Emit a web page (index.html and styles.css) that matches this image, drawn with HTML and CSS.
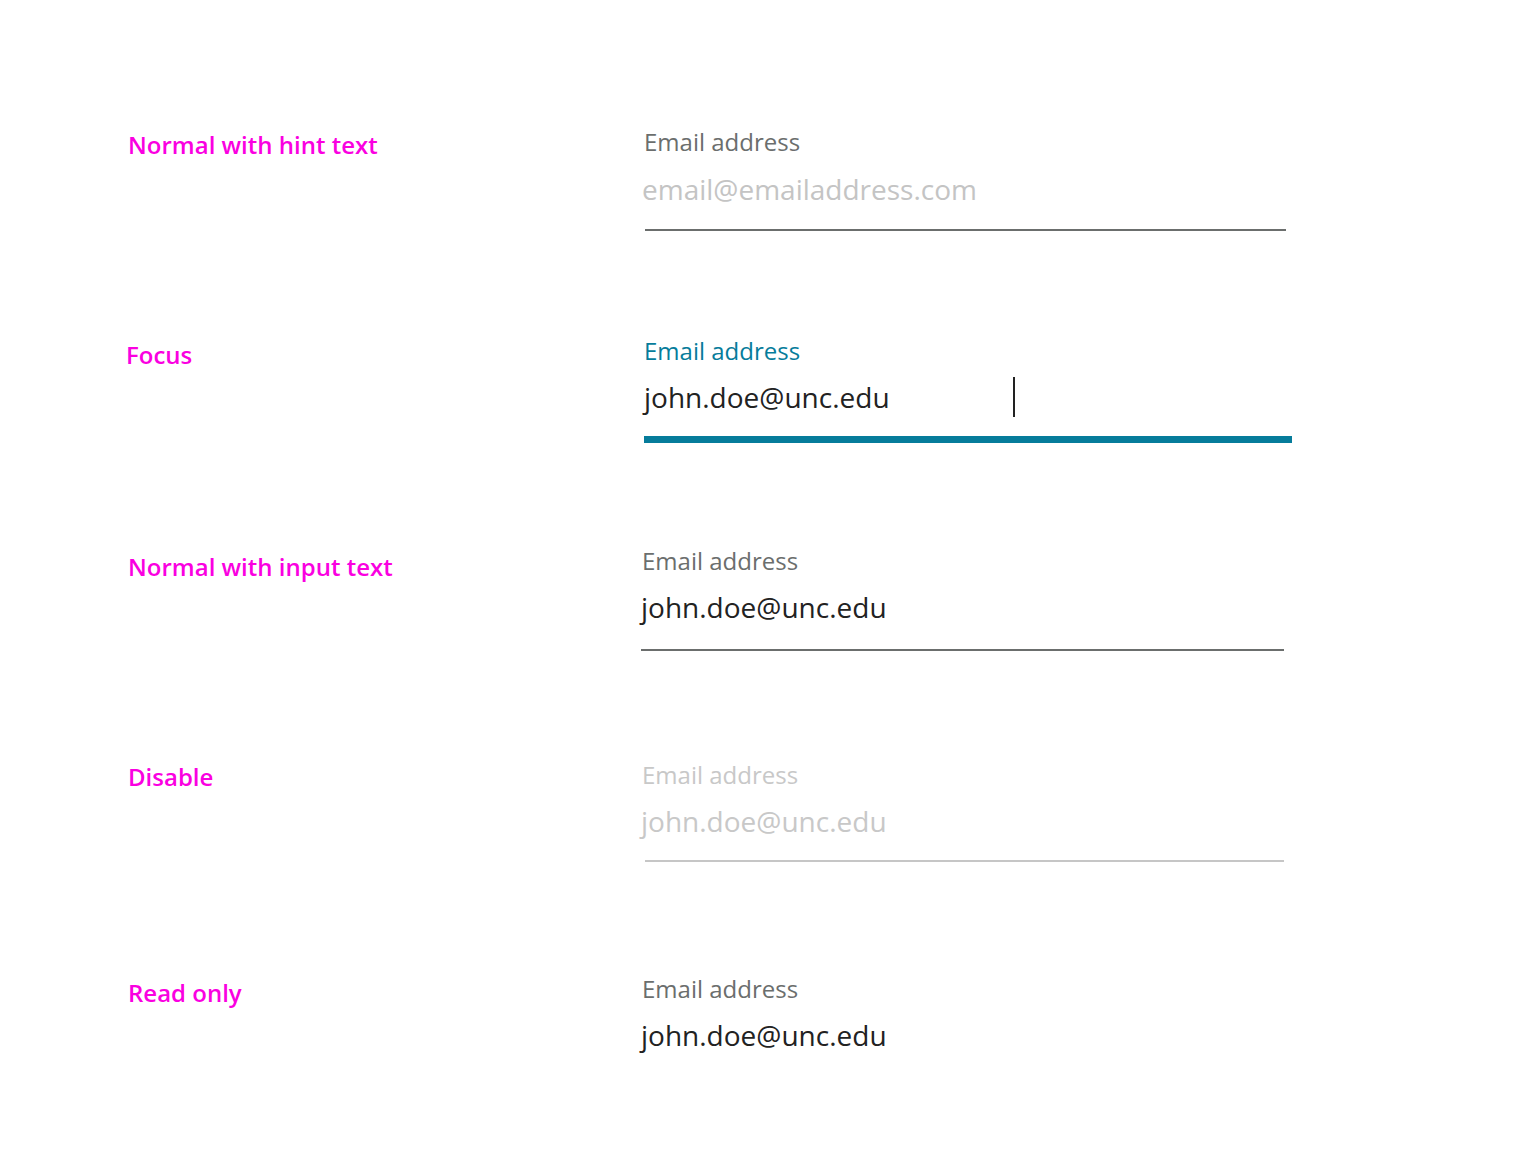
FILE: index.html
```html
<!DOCTYPE html>
<html lang="en">
<head>
<meta charset="utf-8">
<title>Text field states</title>
<link rel="stylesheet" href="styles.css">
</head>
<body>
<main class="page">
  <section class="row row-1">
    <div class="state">Normal with hint text</div>
    <div class="field">
      <div class="field-label">Email address</div>
      <div class="field-value hint">email@emailaddress.com</div>
      <div class="field-line"></div>
    </div>
  </section>

  <section class="row row-2">
    <div class="state state-focus">Focus</div>
    <div class="field field-focus">
      <div class="field-label">Email address</div>
      <div class="field-value">john.doe@unc.edu<span class="caret"></span></div>
      <div class="field-line"></div>
    </div>
  </section>

  <section class="row row-3">
    <div class="state">Normal with input text</div>
    <div class="field field-shift">
      <div class="field-label">Email address</div>
      <div class="field-value">john.doe@unc.edu</div>
      <div class="field-line"></div>
    </div>
  </section>

  <section class="row row-4">
    <div class="state">Disable</div>
    <div class="field field-shift field-disabled">
      <div class="field-label">Email address</div>
      <div class="field-value">john.doe@unc.edu</div>
      <div class="field-line"></div>
    </div>
  </section>

  <section class="row row-5">
    <div class="state">Read only</div>
    <div class="field field-shift">
      <div class="field-label">Email address</div>
      <div class="field-value">john.doe@unc.edu</div>
    </div>
  </section>
</main>
</body>
</html>
```

FILE: styles.css
```css
html, body {
  margin: 0;
  padding: 0;
  background: #ffffff;
}

body {
  font-family: "Open Sans", "Noto Sans", sans-serif;
}

.page {
  padding: 128px 0 0 128px;
  display: flex;
  flex-direction: column;
}

.row {
  display: flex;
  align-items: flex-start;
}

.row-1 { height: 209px; }
.row-2 { height: 210px; }
.row-3 { height: 214px; }
.row-4 { height: 214px; }

.state {
  width: 516px;
  flex: none;
  color: #fa00e1;
  font-size: 24px;
  font-weight: 600;
  line-height: 30px;
  margin-top: 2px;
}

.state-focus {
  margin-left: -2px;
  width: 518px;
  margin-top: 3px;
}

.row-3 .state { margin-top: 5px; }
.row-4 .state { margin-top: 1px; }
.row-5 .state { margin-top: 3px; }

.field {
  display: flex;
  flex-direction: column;
  width: 642px;
}

.field-shift {
  margin-left: -2px;
}

.field-label {
  color: #6b6e6d;
  font-size: 24px;
  line-height: 28px;
}

.field-value {
  margin-top: 15px;
  color: #222222;
  font-size: 28px;
  line-height: 36px;
  height: 36px;
  display: flex;
  align-items: center;
  margin-left: -1px;
}

.field-shift .field-value {
  margin-top: 14px;
}

.field-value.hint {
  color: #c4c4c4;
  margin-left: -2px;
}

.field-line {
  margin-top: 22px;
  height: 2px;
  background: #6b6e6d;
  margin-left: 1px;
}

.row-3 .field-line {
  margin-left: -1px;
  margin-top: 24px;
}

.field-focus {
  width: 648px;
}

.field-focus .field-label {
  color: #067c9b;
}

.field-focus .field-value {
  margin-left: 0;
  margin-top: 14px;
}

.caret {
  display: block;
  flex: none;
  width: 2px;
  height: 40px;
  margin: -2px 0 -2px 123px;
  background: #222222;
}

.field-focus .field-line {
  margin-top: 21px;
  height: 7px;
  margin-left: 0;
  background: #067c9b;
}

.field-disabled .field-label,
.field-disabled .field-value {
  color: #c8c8c8;
}

.field-disabled .field-line {
  background: #c6c6c6;
  margin-left: 3px;
  margin-top: 21px;
}
```
